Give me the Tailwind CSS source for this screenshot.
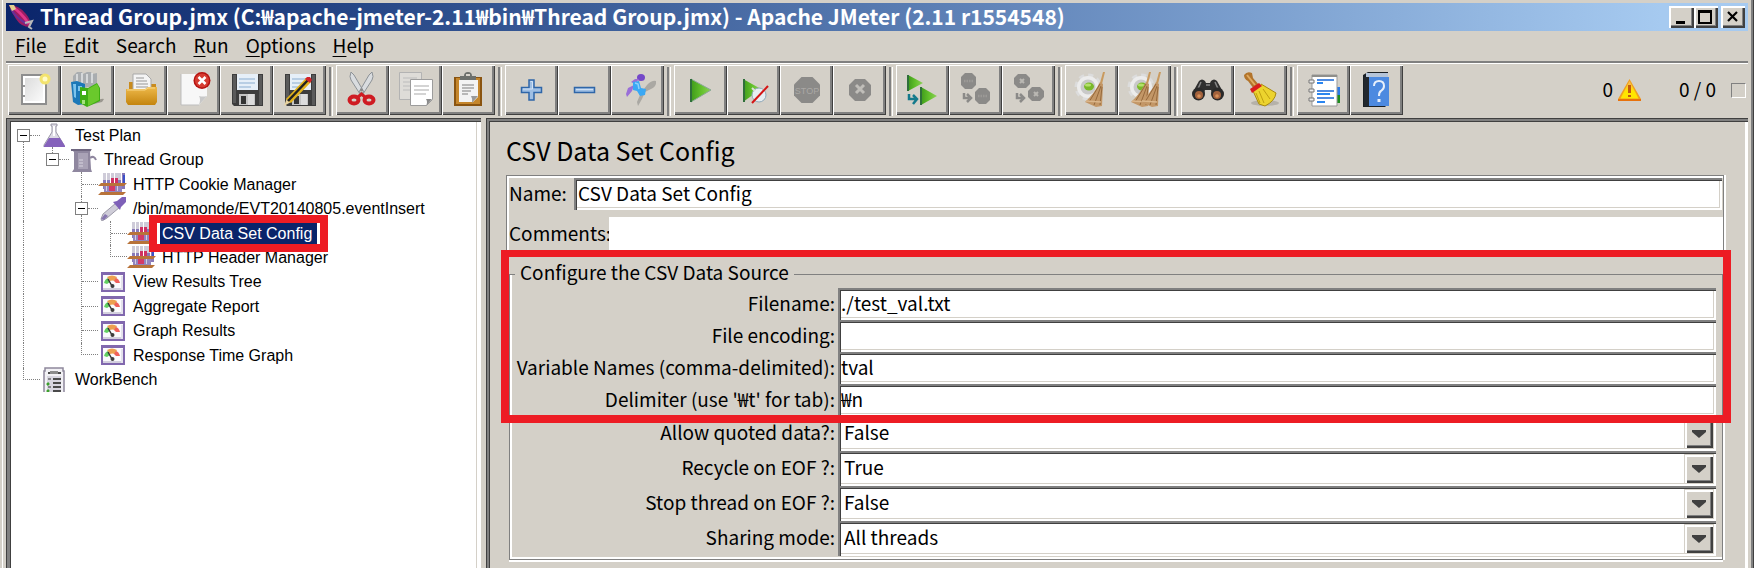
<!DOCTYPE html>
<html lang="en">
<head>
<meta charset="utf-8">
<title>Apache JMeter</title>
<script src="https://cdn.jsdelivr.net/npm/@tailwindcss/browser@4"></script>
</head>
<body class="bg-white font-['Noto_Sans_CJK_KR','Noto_Sans',sans-serif] text-[19px] leading-6 text-black">

<svg class="absolute h-0 w-0" aria-hidden="true">
  <defs>
    <linearGradient id="gGreen" x1="0" y1="0" x2="1" y2="0"><stop offset="0" stop-color="#3f9a1c"/><stop offset=".5" stop-color="#62c02a"/><stop offset="1" stop-color="#8fd05a"/></linearGradient>
    <linearGradient id="gFolder" x1="0" y1="0" x2="0" y2="1"><stop offset="0" stop-color="#eeb94a"/><stop offset="1" stop-color="#c4850f"/></linearGradient>
    <linearGradient id="gPaper" x1="0" y1="0" x2="1" y2="1"><stop offset="0" stop-color="#dcdcdc"/><stop offset="1" stop-color="#fafafa"/></linearGradient>
    <linearGradient id="gWarn" x1="0" y1="0" x2="0" y2="1"><stop offset="0" stop-color="#f7b45a"/><stop offset=".6" stop-color="#ffe600"/><stop offset="1" stop-color="#ffe600"/></linearGradient>
    <symbol id="floppy" viewBox="0 0 36 36">
      <path d="M3 2h31v32H5l-2-2z" fill="#3d3d3d"/><path d="M4 3h3v28H4zM30 3h3v30h-3z" fill="#5a5a5a"/>
      <path d="M8 2h21v16H8z" fill="#e6eff8"/><path d="M10 7h16M10 11h16M10 15h12" stroke="#a9c3dd" stroke-width="1.4"/>
      <path d="M10 22h16v11H10z" fill="#c4c4c4"/><path d="M12 24h5v8h-5z" fill="#333"/><path d="M19 22h6v11h-6z" fill="#dcdcdc"/>
    </symbol>
    <symbol id="tubes" viewBox="0 0 29 24">
      <path d="M5 1h3v16H5zM9 1h3v16H9zM20 1h3v16h-3zM24 1h3v16h-3z" fill="#8878b8"/>
      <path d="M13 1h3v16h-3zM17 1h3v16h-3z" fill="#cf3163"/>
      <path d="M5 1h3v7H5zM9 1h3v7H9zM13 1h3v5h-3zM17 1h3v5h-3zM20 1h3v7h-3z" fill="#cfccd9"/>
      <path d="M25 3h2v8h-2z" fill="#3c50c8"/>
      <path d="M3 11h26l-3 3H0zM3 20h25l-3 3H0z" fill="#b8733a"/><path d="M6 14h18v6H6z" fill="#9385be"/><path d="M11 14h6v5h-6z" fill="#d33a68"/><path d="M8 14h1v5H8zM19 14h1v5h-1z" fill="#d4d0e4"/>
    </symbol>
    <symbol id="gauge" viewBox="0 0 24 20">
      <path d="M0 0h24v20H0z" fill="#8168ae"/><path d="M2 3h20v15H2z" fill="#fbfbfd"/><path d="M2 16h20v2H2z" fill="#d3d0de"/><path d="M20 4h2v14h-2z" fill="#e4e2ec"/>
      <path d="M3 11q1-4 4-5l2 4-3 2z" fill="#62cf62"/><path d="M6 5q5-3 10 0l-2 4q-3-1-5 0z" fill="#eda050"/><path d="M15 6q3 1 4 5h-4l-2-2z" fill="#f0605a"/>
      <path d="M7 7l4 7" stroke="#333" stroke-width="1.5"/><circle cx="11.500" cy="14" r="2" fill="#3d3d3d"/>
    </symbol>
    <symbol id="gear" viewBox="0 0 36 36">
      <circle cx="14" cy="15" r="11.500" fill="none" stroke="#dcdcdc" stroke-width="4" stroke-dasharray="5 4"/>
      <circle cx="14" cy="15" r="11" fill="#ececec"/><circle cx="14" cy="15" r="7.500" fill="#c9c9c9"/>
      <ellipse cx="15" cy="14.500" rx="5" ry="4" fill="#79b82a"/><ellipse cx="14" cy="13" rx="3" ry="1.500" fill="#b4e06a"/>
    </symbol>
    <symbol id="bristles" viewBox="0 0 20 36">
      <path d="M18 0h2l-3 12-2-1z" fill="#c99a5f"/><path d="M15 10l3 2-1 22-6 1L0 30q9-8 15-20z" fill="#c39767"/>
      <path d="M15 12L4 30M16 14L9 33M17 15l-2 18" stroke="#96693c" stroke-width="1"/><path d="M1 29l15 1" stroke="#dbb78c" stroke-width="1.500"/>
    </symbol>
  </defs>
</svg>

<div class="mr-[5px] flex h-screen flex-col overflow-hidden border-r border-r-[#404040] bg-[#d4d0c8] pl-[2px] pt-[3px] shadow-[inset_-2px_0_0_#808080,inset_2px_0_0_#d4d0c8,inset_3px_0_0_#fff]">

  <header class="ml-[4px] mr-[5px] flex h-[28px] shrink-0 items-center bg-linear-to-r from-[#0a246a] to-[#a6caf0] to-95% pr-[3px]">
    <svg class="ml-[2px] mr-[6px] h-[26px] w-[26px]" viewBox="0 0 26 26" aria-hidden="true">
      <path d="M1 1q10 0 17 9 6 7 4 13-9 0-14-8Q3 8 1 1z" fill="#9a1d63"/><path d="M4 3q8 4 17 17" stroke="#e0358a" stroke-width="3" fill="none"/><path d="M3 5q5 9 16 15" stroke="#6a2f9a" stroke-width="2" fill="none"/><path d="M1 1h5l2 4-4 2z" fill="#e2cf8e"/><path d="M17 19l7-2-3 6 3 2" stroke="#b9b9b9" stroke-width="2" fill="none"/>
    </svg>
    <h1 class="flex-1 whitespace-nowrap pb-[2px] text-[21px] font-bold leading-[26px] text-white">Thread Group.jmx (C:₩apache-jmeter-2.11₩bin₩Thread Group.jmx) - Apache JMeter (2.11 r1554548)</h1>
    <div class="flex">
      <button aria-label="Minimize" class="flex h-[22px] w-[25px] items-center justify-center bg-[#d4d0c8] shadow-[inset_2px_2px_0_#fff,inset_-2px_-2px_0_#404040,inset_-3px_-3px_0_#808080]"><svg class="h-[16px] w-[16px]" viewBox="0 0 16 16"><path d="M2 12h9v3H2z"/></svg></button>
      <button aria-label="Maximize" class="flex h-[22px] w-[24px] items-center justify-center bg-[#d4d0c8] shadow-[inset_2px_2px_0_#fff,inset_-2px_-2px_0_#404040,inset_-3px_-3px_0_#808080]"><svg class="h-[16px] w-[16px]" viewBox="0 0 16 16"><path d="M0 1h14v14H0zM2 4v9h10V4z" fill-rule="evenodd"/></svg></button>
      <button aria-label="Close" class="ml-[3px] flex h-[22px] w-[24px] items-center justify-center bg-[#d4d0c8] shadow-[inset_2px_2px_0_#fff,inset_-2px_-2px_0_#404040,inset_-3px_-3px_0_#808080]"><svg class="h-[16px] w-[16px]" viewBox="0 0 16 16"><path d="M3 3l9 9M12 3l-9 9" stroke="#000" stroke-width="2.200"/></svg></button>
    </div>
  </header>

  <nav class="ml-[4px] mr-[5px] flex h-[30px] shrink-0 items-center gap-[17px] pb-[2px] pl-[9px]">
    <button><u class="underline-offset-3">F</u>ile</button>
    <button><u class="underline-offset-3">E</u>dit</button>
    <button>Search</button>
    <button><u class="underline-offset-3">R</u>un</button>
    <button><u class="underline-offset-3">O</u>ptions</button>
    <button><u class="underline-offset-3">H</u>elp</button>
  </nav>
  <div class="ml-[4px] mr-[5px] h-[3px] shrink-0 border-b border-white bg-[#808080]"></div>

  <div class="ml-[6px] mr-[5px] flex h-[54px] shrink-0 items-center gap-[3px] pb-[2px]">
    <div class="flex *:flex *:h-[50px] *:w-[53px] *:items-center *:justify-center *:shadow-[inset_1px_1px_0_#fff,inset_-1px_-1px_0_#404040,inset_-3px_-3px_0_#808080]">
      <button aria-label="New"><svg class="size-[36px]" viewBox="0 0 36 36"><path d="M4 2h26v31H4z" fill="#8e8e8e"/><path d="M6 4h22v27H6z" fill="#fff"/><path d="M8 6h18v23H8z" fill="url(#gPaper)"/><path d="M6 13h2v2H6zM6 23h2v2H6z" fill="#999"/><circle cx="28" cy="7" r="5.500" fill="#f3e36e"/><circle cx="28" cy="7" r="2.500" fill="#fffbc8"/></svg></button>
      <button aria-label="Templates"><svg class="size-[36px]" viewBox="0 0 36 36"><path d="M3 4l4-4h5l1 2 4-2h4l1 2 5-1v14H3z" fill="#a9adb0"/><path d="M7 2v9M12 1v10M17 2v9M22 1v10" stroke="#e4e6e8" stroke-width="1.500"/><path d="M1 10l6-1 8 3v20l-7 1-5-3z" fill="#1b78b8"/><path d="M3 12h3v14l-2-1zM8 14h4v5H8z" fill="#7cc3ec"/><path d="M25 30q6-4 9-3l-2 3-12 3z" fill="#9a978f"/><path d="M10 15l8 1 9-5 3 5v13l-13 6-7-4z" fill="#3fae14"/><path d="M18 17l9-5 2 4v12l-11 6z" fill="#6ac92c"/><path d="M12 19h4v4h-4z" fill="#fff"/><path d="M12 28h3v4h-3z" fill="#a4e27c"/></svg></button>
      <button aria-label="Open"><svg class="size-[36px]" viewBox="0 0 36 36"><path d="M6 10h6l2 2h19v12H6z" fill="#c98b1d"/><path d="M10 2h13l5 5v15H10z" fill="#f4f4f4" stroke="#a9a9a9"/><path d="M13 6h8M13 9h11M13 12h12M13 15h12" stroke="#b5b5b5" stroke-width="1.300"/><path d="M3 17h19l3-2h9v15l-2 3H5l-2-3z" fill="url(#gFolder)"/><path d="M4 18h18l3-2h7" stroke="#f8d88a" fill="none"/></svg></button>
      <button aria-label="Close file"><svg class="size-[36px]" viewBox="0 0 36 36"><path d="M5 2h26v22l-8 9H5z" fill="#f7f7f7"/><path d="M5 2v31h18" stroke="#bdbdbd" fill="none"/><path d="M31 24l-8 9q2-6 0-9 4 1 8 0z" fill="#c8c8c8"/><circle cx="26" cy="8.500" r="8.500" fill="#b5120f"/><circle cx="26" cy="8.500" r="7" fill="#d63c31"/><path d="M22.500 5l7 7M29.500 5l-7 7" stroke="#fff" stroke-width="2.500"/></svg></button>
      <button aria-label="Save"><svg class="size-[36px]"><use href="#floppy"/></svg></button>
      <button aria-label="Save as"><svg class="size-[36px]" viewBox="0 0 36 36"><use href="#floppy" width="36" height="36"/><path d="M2 34l3-8 4 4z" fill="#e8d3a0"/><path d="M4 27L24 6l5 4L9 31z" fill="#e2b21c"/><path d="M6 29L26 8" stroke="#222" stroke-width="2.500"/><path d="M23 7l2-2h3l2 3-2 3z" fill="#d2232a"/></svg></button>
    </div>
    <div class="h-[49px] w-[4px] self-end border-l-2 border-r border-l-[#808080] border-r-white"></div>
    <div class="flex *:flex *:h-[50px] *:w-[53px] *:items-center *:justify-center *:shadow-[inset_1px_1px_0_#fff,inset_-1px_-1px_0_#404040,inset_-3px_-3px_0_#808080]">
      <button aria-label="Cut"><svg class="size-[36px]" viewBox="0 0 36 36"><path d="M6 0q-2 5 0 8l9 14 4-2L9 3zM27 0q2 5 0 8l-9 14-4-2L24 3z" fill="#d9dcdf" stroke="#8c9196"/><circle cx="16.500" cy="18" r="1.500" fill="#888"/><g fill="none" stroke="#cf1b22" stroke-width="4"><ellipse cx="9" cy="28" rx="4.500" ry="3.500"/><ellipse cx="24" cy="28" rx="4.500" ry="3.500"/><path d="M13 25l3.500-3 3.500 3" stroke-width="3"/></g></svg></button>
      <button aria-label="Copy"><svg class="size-[36px]" viewBox="0 0 36 36"><path d="M1.500.5h22v27h-22z" fill="#dedcd8" stroke="#b3b3b3"/><path d="M5 6h14M5 10h8M5 14h7M5 18h7" stroke="#bcbcbc"/><path d="M12.500 7.500h22v20l-6 6h-16z" fill="#fff" stroke="#9c9c9c"/><path d="M16 14h15M16 18h15M16 22h12" stroke="#c6c6c6" stroke-width="1.500"/><path d="M34 27l-6 7q2-4 0-7z" fill="#8a8a8a"/></svg></button>
      <button aria-label="Paste"><svg class="size-[36px]" viewBox="0 0 36 36"><path d="M3 5h28v29H3z" fill="#8a5410"/><path d="M5 6h24v26H5z" fill="#c5862b"/><path d="M8 8h19v17l-5 5H8z" fill="#f3f3f3"/><path d="M11 13h12M11 16h12M11 19h9M11 22h6" stroke="#a5a5a5" stroke-width="1.300"/><path d="M27 24l-6 7q1-4-1-7z" fill="#999"/><path d="M9 4h4q0-4 4-4t4 4h4v4H9z" fill="#6d706c"/><path d="M15 2h4v2h-4z" fill="#d8d4cc"/></svg></button>
    </div>
    <div class="h-[49px] w-[4px] self-end border-l-2 border-r border-l-[#808080] border-r-white"></div>
    <div class="flex *:flex *:h-[50px] *:w-[53px] *:items-center *:justify-center *:shadow-[inset_1px_1px_0_#fff,inset_-1px_-1px_0_#404040,inset_-3px_-3px_0_#808080]">
      <button aria-label="Expand all"><svg class="size-[36px]" viewBox="0 0 36 36"><path d="M15 8h5v7.500h7.500v5H20V28h-5v-7.500H7.500v-5H15z" fill="#9fbfe4" stroke="#2f66a8" stroke-width="1.500"/><path d="M16.500 9.500h2v7.500H9" stroke="#d3e3f5" fill="none"/></svg></button>
      <button aria-label="Collapse all"><svg class="size-[36px]" viewBox="0 0 36 36"><path d="M7.500 15.500h20v5h-20z" fill="#9fbfe4" stroke="#2f66a8" stroke-width="1.500"/><path d="M9 17.500h17" stroke="#cfe0f4"/></svg></button>
      <button aria-label="Toggle"><svg class="size-[36px]" viewBox="0 0 36 36"><path d="M19 21l5-4 3-4q5-5 9-4 1 5-5 8l-6 3-3 7-4 7-1-4 3-7z" fill="#aaa8a3"/><g fill="#7448c8"><ellipse cx="21" cy="5.500" rx="4" ry="3.500"/><path d="M11 10l4-3 4 0-4 5zM14 13l-2 6-5 6-1-3 2-6z" fill="#9a6fd8"/></g><path d="M13 10l6-1 2 7 5 1-1 6-5 1-3-5-4-1z" fill="#3aa8f4"/><path d="M15 11l3 1 1 5" stroke="#8fd2fb" stroke-width="1.500" fill="none"/></svg></button>
    </div>
    <div class="h-[49px] w-[4px] self-end border-l-2 border-r border-l-[#808080] border-r-white"></div>
    <div class="flex *:flex *:h-[50px] *:w-[53px] *:items-center *:justify-center *:shadow-[inset_1px_1px_0_#fff,inset_-1px_-1px_0_#404040,inset_-3px_-3px_0_#808080]">
      <button aria-label="Start"><svg class="size-[36px]" viewBox="0 0 36 36"><path d="M8 7l20 11L8 30z" fill="url(#gGreen)"/><path d="M8 7l20 11L8 30" stroke="#8aa897" fill="none"/><path d="M7 7h2v23H7z" fill="#2f6f3a"/></svg></button>
      <button aria-label="Start no pauses"><svg class="size-[36px]" viewBox="0 0 36 36"><path d="M7 7l18 10L7 30z" fill="url(#gGreen)"/><path d="M7 7h2v23H7z" fill="#2f6f3a"/><circle cx="23" cy="23" r="7" fill="#e6eef2" stroke="#8fa8b8"/><path d="M16 16l3 3M30 16l-3 3" stroke="#ddd" stroke-width="2"/><path d="M16 31l16-17" stroke="#d41414" stroke-width="2"/></svg></button>
      <button aria-label="Stop" disabled><svg class="size-[36px]" viewBox="0 0 36 36"><path d="M12.500 5h11L31 12.500v11L23.500 31h-11L5 23.500v-11z" fill="#8b8a88"/><text x="18" y="22" text-anchor="middle" font-family="Liberation Sans" font-size="9" fill="#aaa8a5">STOP</text></svg></button>
      <button aria-label="Shutdown" disabled><svg class="size-[36px]" viewBox="0 0 36 36"><path d="M13 7h10l6 6v10l-6 6H13l-6-6V13z" fill="#8b8a88"/><path d="M14 13l8 8M22 13l-8 8" stroke="#c0beb9" stroke-width="3"/></svg></button>
    </div>
    <div class="h-[49px] w-[4px] self-end border-l-2 border-r border-l-[#808080] border-r-white"></div>
    <div class="flex *:flex *:h-[50px] *:w-[53px] *:items-center *:justify-center *:shadow-[inset_1px_1px_0_#fff,inset_-1px_-1px_0_#404040,inset_-3px_-3px_0_#808080]">
      <button aria-label="Remote start all"><svg class="size-[36px]" viewBox="0 0 36 36"><path d="M3 3l15 8-15 8z" fill="url(#gGreen)"/><path d="M2 3h2v16H2z" fill="#2f6f3a"/><path d="M16 15l16 9-16 9z" fill="url(#gGreen)"/><path d="M15 15h2v18h-2z" fill="#2f6f3a"/><path d="M4 22v5h7M8 23l4 4-4 5" stroke="#147a8c" stroke-width="2.500" fill="none"/></svg></button>
      <button aria-label="Remote stop all" disabled><svg class="size-[36px]" viewBox="0 0 36 36" fill="#8b8a88"><path d="M7 1h7l4 4v8l-4 4H7l-4-4V5zM21 16h7l4 4v8l-4 4h-7l-4-4v-8z"/><path d="M6 9h9M20 24h9" stroke="#9c9a97" stroke-width="2.500" stroke-dasharray="1.500 1"/><path d="M6 21v5h5M9 22l4 4-4 4" stroke="#8b8a88" stroke-width="2.500" fill="none"/></svg></button>
      <button aria-label="Remote shutdown all" disabled><svg class="size-[36px]" viewBox="0 0 36 36" fill="#8b8a88"><path d="M7 2h8l4 4v6l-4 4H7l-4-4V6zM21 15h8l4 4v6l-4 4h-8l-4-4v-6z"/><path d="M9 7l4 4M13 7l-4 4M23 20l4 4M27 20l-4 4" stroke="#bab8b3" stroke-width="2"/><path d="M6 21v5h5M9 22l4 4-4 4" stroke="#8b8a88" stroke-width="2.500" fill="none"/></svg></button>
    </div>
    <div class="h-[49px] w-[4px] self-end border-l-2 border-r border-l-[#808080] border-r-white"></div>
    <div class="flex *:flex *:h-[50px] *:w-[53px] *:items-center *:justify-center *:shadow-[inset_1px_1px_0_#fff,inset_-1px_-1px_0_#404040,inset_-3px_-3px_0_#808080]">
      <button aria-label="Clear"><svg class="size-[36px]" viewBox="0 0 36 36"><use href="#gear" width="36" height="36"/><use href="#bristles" x="11" y="0" width="20" height="36"/></svg></button>
      <button aria-label="Clear all"><svg class="size-[36px]" viewBox="0 0 36 36"><use href="#gear" width="36" height="36"/><use href="#bristles" x="4" y="0" width="20" height="36"/><use href="#bristles" x="14" y="0" width="20" height="36"/></svg></button>
    </div>
    <div class="h-[49px] w-[4px] self-end border-l-2 border-r border-l-[#808080] border-r-white"></div>
    <div class="flex *:flex *:h-[50px] *:w-[53px] *:items-center *:justify-center *:shadow-[inset_1px_1px_0_#fff,inset_-1px_-1px_0_#404040,inset_-3px_-3px_0_#808080]">
      <button aria-label="Search tree"><svg class="size-[36px]" viewBox="0 0 36 36"><path d="M9 9q3-3 6 0l1 2h4l1-2q3-3 6 0l5 9v6h-9l-2-6h-6l-2 6H4v-6z" fill="#2f2f2f"/><path d="M11 10l-4 9M25 10l4 9M16 13h4" stroke="#888" stroke-width="1.500"/><circle cx="8.500" cy="22" r="6.500" fill="#2a2a2a"/><circle cx="27.500" cy="22" r="6.500" fill="#2a2a2a"/><circle cx="9" cy="23" r="4" fill="#a3623c"/><circle cx="27" cy="23" r="4" fill="#a3623c"/><circle cx="9" cy="24" r="1.800" fill="#d89058"/><circle cx="27" cy="24" r="1.800" fill="#d89058"/></svg></button>
      <button aria-label="Reset search"><svg class="size-[36px]" viewBox="0 0 36 36"><ellipse cx="22" cy="31" rx="14" ry="3" fill="#b5b1a9"/><path d="M1 3q3-4 8-2l1 5 6 7-5 4-6-8q-4-2-4-6z" fill="#b3752c"/><path d="M4 3l8 10" stroke="#e0aa60" stroke-width="2"/><path d="M18 12l15 9q-1 8-11 13l-6-2-6-13z" fill="#ecd32e"/><path d="M20 17l7 10M16 19l5 12M13 21l4 10" stroke="#c0a010"/><path d="M18 12l15 9q-1 8-11 13l-6-2-6-13" fill="none" stroke="#a88a10"/><path d="M7 17l9-6 3 3-10 7z" fill="#d81e1e"/></svg></button>
    </div>
    <div class="h-[49px] w-[4px] self-end border-l-2 border-r border-l-[#808080] border-r-white"></div>
    <div class="flex *:flex *:h-[50px] *:w-[53px] *:items-center *:justify-center *:shadow-[inset_1px_1px_0_#fff,inset_-1px_-1px_0_#404040,inset_-3px_-3px_0_#808080]">
      <button aria-label="Function helper"><svg class="size-[36px]" viewBox="0 0 36 36"><path d="M31 15h3v8h-3z" fill="#2b7ae8"/><path d="M31 23h3v8h-3z" fill="#1d8c1d"/><path d="M6 3h25v31H6z" fill="#fff" stroke="#999"/><path d="M6 3h25v2H6z" fill="#8f8f8b"/><path d="M11 8h17M11 19h17M11 26h17" stroke="#1565d8" stroke-width="1.600"/><path d="M11 11h6M11 22h13M11 30h8" stroke="#2a86f0" stroke-width="2"/><path d="M3 8h5v3H3zM3 17h5v3H3zM3 26h5v3H3z" fill="#eee" stroke="#777"/></svg></button>
      <button aria-label="Help"><svg class="size-[36px]" viewBox="0 0 36 36"><path d="M4 3l5-3h20v32l-3 3H4z" fill="#1b2024"/><path d="M7 1h22v4H7z" fill="#b5c4d8"/><path d="M10 5h20v29H10z" fill="#4d8ae0"/><path d="M5 5h5v29H5z" fill="#22282e"/><path d="M15 14q0-5 5-5t5 5q0 3-3 5-2 1-2 5" fill="none" stroke="#e8f0fb" stroke-width="2"/><path d="M18.500 27h3v3h-3z" fill="#e8f0fb"/></svg></button>
    </div>
    <div class="flex flex-1 items-center justify-end">
      <span class="pb-[2px]">0</span>
      <svg class="ml-[5px] h-[22px] w-[23px]" viewBox="0 0 23 22" aria-label="Warnings"><path d="M11.500 0L23 20v2H0v-2z" fill="#f0a020"/><path d="M0 20h23v2H0z" fill="#e8720c"/><path d="M11.500 2l9 17.500h-18z" fill="url(#gWarn)"/><path d="M10 6h3v8h-3zM10 16h3v2h-3z" fill="#c25a12"/></svg>
      <span class="ml-[38px] pb-[2px]">0 / 0</span>
      <span class="ml-[15px] mr-[2px] size-[15px] border border-b-white border-l-[#808080] border-r-white border-t-[#808080]"></span>
    </div>
  </div>

  <main class="ml-[4px] mr-[5px] flex min-h-0 flex-1">
    <section aria-label="Test tree" class="w-[475px] shrink-0 bg-white pl-[5px] pt-[5px] shadow-[inset_1px_1px_0_#404040,inset_4px_3px_0_#808080,inset_5px_4px_0_#404040,inset_-4px_0_0_#fff,inset_-5px_0_0_#d4d0c8]">
      <ul class="flex h-[269px] flex-col font-['Liberation_Sans',sans-serif] text-[16px] leading-[21px] *:flex *:min-h-0 *:flex-1 *:items-center">
        <li>
          <div class="flex h-full w-[29px] flex-col">
            <div class="flex-1"></div>
            <div class="flex items-center pl-[6px]"><button aria-label="Collapse" class="flex size-[13px] items-center justify-center border border-[#808080] bg-white"><span class="h-px w-[7px] bg-black"></span></button><span class="flex-1 border-t border-dotted border-[#808080]"></span></div>
            <div class="ml-[12px] flex-1 border-l border-dotted border-[#808080]"></div>
          </div>
          <svg class="mr-[4px] h-[24px] w-[29px]" viewBox="0 0 29 24"><path d="M11 1h6v2h-1v6l8 13v2H4v-2l8-13V3h-1z" fill="#dcdae4" stroke="#9a98a6"/><path d="M9 15h11l5 8v1H4v-1z" fill="#8562bb"/><path d="M13 3h2v10h-2z" fill="#fff"/></svg>
          <span class="px-[2px]">Test Plan</span>
        </li>
        <li>
          <div class="h-full w-[29px] pl-[12px]"><div class="h-full border-l border-dotted border-[#808080]"></div></div>
          <div class="flex h-full w-[29px] flex-col">
            <div class="ml-[12px] flex-1 border-l border-dotted border-[#808080]"></div>
            <div class="flex items-center pl-[6px]"><button aria-label="Collapse" class="flex size-[13px] items-center justify-center border border-[#808080] bg-white"><span class="h-px w-[7px] bg-black"></span></button><span class="flex-1 border-t border-dotted border-[#808080]"></span></div>
            <div class="flex-1"></div>
          </div>
          <svg class="mr-[4px] h-[24px] w-[29px]" viewBox="0 0 29 24"><path d="M2 1h21l-2 3 1 17 1 3H3l2-3V4z" fill="#8f879f"/><path d="M9 5h10v16H9z" fill="#a9a2b6"/><path d="M2 1h20v2H2z" fill="#6f6780"/><path d="M21 10q4-3 6 2" fill="none" stroke="#8f879f" stroke-width="2"/><path d="M10 12h4M10 15h4M10 18h4" stroke="#d8d5e0"/></svg>
          <span class="px-[2px]">Thread Group</span>
        </li>
        <li>
          <div class="h-full w-[29px] pl-[12px]"><div class="h-full border-l border-dotted border-[#808080]"></div></div>
          <div class="w-[29px]"></div>
          <div class="h-full w-[29px] pl-[12px]"><div class="flex h-full items-center border-l border-dotted border-[#808080]"><span class="flex-1 border-t border-dotted border-[#808080]"></span></div></div>
          <svg class="mr-[4px] h-[24px] w-[29px]"><use href="#tubes"/></svg>
          <span class="px-[2px]">HTTP Cookie Manager</span>
        </li>
        <li>
          <div class="h-full w-[29px] pl-[12px]"><div class="h-full border-l border-dotted border-[#808080]"></div></div>
          <div class="w-[29px]"></div>
          <div class="flex h-full w-[29px] flex-col">
            <div class="ml-[12px] flex-1 border-l border-dotted border-[#808080]"></div>
            <div class="flex items-center pl-[6px]"><button aria-label="Collapse" class="flex size-[13px] items-center justify-center border border-[#808080] bg-white"><span class="h-px w-[7px] bg-black"></span></button><span class="flex-1 border-t border-dotted border-[#808080]"></span></div>
            <div class="ml-[12px] flex-1 border-l border-dotted border-[#808080]"></div>
          </div>
          <svg class="mr-[4px] h-[24px] w-[29px]" viewBox="0 0 29 24"><path d="M3 22l2-5L18 6l4 4L9 21l-5 3z" fill="#cfcdd8" stroke="#9c9aa8"/><path d="M3 22l4-5 3 2-4 4z" fill="#8878b0"/><path d="M15 5l4-1 5-4h4v5l-5 5-1 3z" fill="#7e60b8"/></svg>
          <span class="px-[2px]">/bin/mamonde/EVT20140805.eventInsert</span>
        </li>
        <li>
          <div class="h-full w-[29px] pl-[12px]"><div class="h-full border-l border-dotted border-[#808080]"></div></div>
          <div class="w-[29px]"></div>
          <div class="h-full w-[29px] pl-[12px]"><div class="h-full border-l border-dotted border-[#808080]"></div></div>
          <div class="h-full w-[29px] pl-[12px]"><div class="flex h-full items-center border-l border-dotted border-[#808080]"><span class="flex-1 border-t border-dotted border-[#808080]"></span></div></div>
          <svg class="mr-[4px] h-[24px] w-[29px]"><use href="#tubes"/></svg>
          <div class="relative bg-[#0a246a] pl-[2px] pr-[5px] text-white">CSV Data Set Config<span class="absolute -inset-x-[11px] -bottom-[8px] -top-[8px] z-10 border-8 border-[#ed1c24]"></span></div>
        </li>
        <li>
          <div class="h-full w-[29px] pl-[12px]"><div class="h-full border-l border-dotted border-[#808080]"></div></div>
          <div class="w-[29px]"></div>
          <div class="h-full w-[29px] pl-[12px]"><div class="h-full border-l border-dotted border-[#808080]"></div></div>
          <div class="h-full w-[29px] pl-[12px]"><div class="h-1/2 border-b border-l border-dotted border-[#808080]"></div></div>
          <svg class="mr-[4px] h-[24px] w-[29px]"><use href="#tubes"/></svg>
          <span class="px-[2px]">HTTP Header Manager</span>
        </li>
        <li>
          <div class="h-full w-[29px] pl-[12px]"><div class="h-full border-l border-dotted border-[#808080]"></div></div>
          <div class="w-[29px]"></div>
          <div class="h-full w-[29px] pl-[12px]"><div class="flex h-full items-center border-l border-dotted border-[#808080]"><span class="flex-1 border-t border-dotted border-[#808080]"></span></div></div>
          <svg class="ml-[3px] mr-[6px] h-[20px] w-[24px]"><use href="#gauge"/></svg>
          <span class="px-[2px]">View Results Tree</span>
        </li>
        <li>
          <div class="h-full w-[29px] pl-[12px]"><div class="h-full border-l border-dotted border-[#808080]"></div></div>
          <div class="w-[29px]"></div>
          <div class="h-full w-[29px] pl-[12px]"><div class="flex h-full items-center border-l border-dotted border-[#808080]"><span class="flex-1 border-t border-dotted border-[#808080]"></span></div></div>
          <svg class="ml-[3px] mr-[6px] h-[20px] w-[24px]"><use href="#gauge"/></svg>
          <span class="px-[2px]">Aggregate Report</span>
        </li>
        <li>
          <div class="h-full w-[29px] pl-[12px]"><div class="h-full border-l border-dotted border-[#808080]"></div></div>
          <div class="w-[29px]"></div>
          <div class="h-full w-[29px] pl-[12px]"><div class="flex h-full items-center border-l border-dotted border-[#808080]"><span class="flex-1 border-t border-dotted border-[#808080]"></span></div></div>
          <svg class="ml-[3px] mr-[6px] h-[20px] w-[24px]"><use href="#gauge"/></svg>
          <span class="px-[2px]">Graph Results</span>
        </li>
        <li>
          <div class="h-full w-[29px] pl-[12px]"><div class="h-full border-l border-dotted border-[#808080]"></div></div>
          <div class="w-[29px]"></div>
          <div class="h-full w-[29px] pl-[12px]"><div class="h-1/2 border-b border-l border-dotted border-[#808080]"></div></div>
          <svg class="ml-[3px] mr-[6px] h-[20px] w-[24px]"><use href="#gauge"/></svg>
          <span class="px-[2px]">Response Time Graph</span>
        </li>
        <li>
          <div class="h-full w-[29px] pl-[12px]"><div class="h-1/2 border-b border-l border-dotted border-[#808080]"></div></div>
          <svg class="mr-[4px] h-[25px] w-[29px]" viewBox="0 0 29 25"><path d="M4 25V4h1V1h18v3h1v21" fill="#f2f1f5" stroke="#8e889c" stroke-width="1.500"/><path d="M8 5h13v2H8z" fill="#4a4a4a"/><path d="M10 4h8v3h-8z" fill="#8b8b8b"/><path d="M7 9h14v16H7z" fill="#d8d6e0"/><path d="M13 12h8M13 16h8M13 20h8M13 24h8" stroke="#4a4a4a" stroke-width="2"/><path d="M8 12h3M8 20h3" stroke="#333"/><path d="M7 18l2-2M7 25l2-2" stroke="#3ca02c" stroke-width="2.500"/></svg>
          <span class="px-[2px]">WorkBench</span>
        </li>
      </ul>
    </section>

    <section aria-label="CSV Data Set Config" class="ml-[5px] min-w-0 flex-1 pl-[20px] pr-[24px] pt-[19px] shadow-[inset_1px_1px_0_#404040,inset_3px_3px_0_#808080,inset_4px_4px_0_#404040,inset_-3px_0_0_#fff]">
      <h2 class="h-[38px] text-[25px] leading-[26px]">CSV Data Set Config</h2>

      <div class="flex flex-col border border-b-0 border-[#808080] pl-[2px] shadow-[inset_2px_2px_0_#fff,2px_0_0_#fff]">
        <div class="flex items-center pr-[1px] pt-[2px]">
          <label for="name" class="w-[65px] pb-[3px]">Name:</label>
          <input id="name" type="text" value="CSV Data Set Config" class="h-[32px] min-w-0 flex-1 bg-white pb-[3px] pl-[4px] pr-1 shadow-[inset_2px_2px_0_#808080,inset_3px_3px_0_#404040,inset_-2px_-2px_0_#fff,inset_-3px_-3px_0_#d4d0c8]">
        </div>
        <div class="flex items-center pt-[7px]">
          <label for="comments" class="w-[100px] pb-[2px]">Comments:</label>
          <input id="comments" type="text" value="" class="h-[33px] min-w-0 flex-1 bg-white px-1">
        </div>
      </div>

      <div class="relative ml-[3px] mr-px pt-[10px]">
        <span class="pointer-events-none absolute -left-[8px] -right-[8px] top-0 z-10 h-[173px] border-8 border-t-7 border-[#ed1c24]"></span>
        <fieldset class="border border-[#808080] pb-[3px] pl-[2px] pr-[6px] shadow-[inset_2px_0_0_#fff,inset_0_-2px_0_#fff,2px_0_0_#fff,0_2px_0_#fff]">
          <legend class="ml-[3px] px-[5px] pb-1 leading-6">Configure the CSV Data Source</legend>
          <div class="grid grid-cols-[326px_1fr] items-center [&>label]:pb-[3px] [&>label]:pr-[3px] [&>label]:text-right">
            <label for="filename">Filename:</label>
            <input id="filename" type="text" value="./test_val.txt" class="h-[32px] min-w-0 bg-white pb-[3px] pl-[3px] shadow-[inset_2px_2px_0_#808080,inset_3px_3px_0_#404040,inset_-2px_-2px_0_#fff,inset_-3px_-3px_0_#d4d0c8]">
            <label for="encoding">File encoding:</label>
            <input id="encoding" type="text" value="" class="h-[32px] min-w-0 bg-white pb-[3px] pl-[3px] shadow-[inset_2px_2px_0_#808080,inset_3px_3px_0_#404040,inset_-2px_-2px_0_#fff,inset_-3px_-3px_0_#d4d0c8]">
            <label for="vars">Variable Names (comma-delimited):</label>
            <input id="vars" type="text" value="tval" class="h-[32px] min-w-0 bg-white pb-[3px] pl-[3px] shadow-[inset_2px_2px_0_#808080,inset_3px_3px_0_#404040,inset_-2px_-2px_0_#fff,inset_-3px_-3px_0_#d4d0c8]">
            <label for="delim">Delimiter (use '₩t' for tab):</label>
            <input id="delim" type="text" value="₩n" class="h-[32px] min-w-0 bg-white pb-[3px] pl-[3px] shadow-[inset_2px_2px_0_#808080,inset_3px_3px_0_#404040,inset_-2px_-2px_0_#fff,inset_-3px_-3px_0_#d4d0c8]">

            <label for="quoted">Allow quoted data?:</label>
            <div class="relative">
              <select id="quoted" class="block h-[35px] w-full appearance-none bg-white pb-[3px] pl-[6px] shadow-[inset_2px_2px_0_#808080,inset_3px_3px_0_#404040,inset_-2px_-2px_0_#fff,inset_-3px_-3px_0_#d4d0c8]"><option>False</option><option>True</option></select>
              <span class="pointer-events-none absolute bottom-[3px] right-[3px] top-[3px] flex w-[29px] items-center justify-center bg-[#d4d0c8] shadow-[inset_1px_1px_0_#d4d0c8,inset_3px_3px_0_#fff,inset_-2px_-2px_0_#404040,inset_-3px_-3px_0_#808080]"><svg class="h-[8px] w-[14px]" viewBox="0 0 14 8"><path d="M0 0h14v2L7 8 0 2z" fill="#404040"/></svg></span>
            </div>
            <label for="recycle">Recycle on EOF ?:</label>
            <div class="relative">
              <select id="recycle" class="block h-[35px] w-full appearance-none bg-white pb-[3px] pl-[6px] shadow-[inset_2px_2px_0_#808080,inset_3px_3px_0_#404040,inset_-2px_-2px_0_#fff,inset_-3px_-3px_0_#d4d0c8]"><option>True</option><option>False</option></select>
              <span class="pointer-events-none absolute bottom-[3px] right-[3px] top-[3px] flex w-[29px] items-center justify-center bg-[#d4d0c8] shadow-[inset_1px_1px_0_#d4d0c8,inset_3px_3px_0_#fff,inset_-2px_-2px_0_#404040,inset_-3px_-3px_0_#808080]"><svg class="h-[8px] w-[14px]" viewBox="0 0 14 8"><path d="M0 0h14v2L7 8 0 2z" fill="#404040"/></svg></span>
            </div>
            <label for="stop">Stop thread on EOF ?:</label>
            <div class="relative">
              <select id="stop" class="block h-[35px] w-full appearance-none bg-white pb-[3px] pl-[6px] shadow-[inset_2px_2px_0_#808080,inset_3px_3px_0_#404040,inset_-2px_-2px_0_#fff,inset_-3px_-3px_0_#d4d0c8]"><option>False</option><option>True</option></select>
              <span class="pointer-events-none absolute bottom-[3px] right-[3px] top-[3px] flex w-[29px] items-center justify-center bg-[#d4d0c8] shadow-[inset_1px_1px_0_#d4d0c8,inset_3px_3px_0_#fff,inset_-2px_-2px_0_#404040,inset_-3px_-3px_0_#808080]"><svg class="h-[8px] w-[14px]" viewBox="0 0 14 8"><path d="M0 0h14v2L7 8 0 2z" fill="#404040"/></svg></span>
            </div>
            <label for="sharing">Sharing mode:</label>
            <div class="relative">
              <select id="sharing" class="block h-[35px] w-full appearance-none bg-white pb-[3px] pl-[6px] shadow-[inset_2px_2px_0_#808080,inset_3px_3px_0_#404040,inset_-2px_-2px_0_#fff,inset_-3px_-3px_0_#d4d0c8]"><option>All threads</option><option>Current thread group</option><option>Current thread</option></select>
              <span class="pointer-events-none absolute bottom-[3px] right-[3px] top-[3px] flex w-[29px] items-center justify-center bg-[#d4d0c8] shadow-[inset_1px_1px_0_#d4d0c8,inset_3px_3px_0_#fff,inset_-2px_-2px_0_#404040,inset_-3px_-3px_0_#808080]"><svg class="h-[8px] w-[14px]" viewBox="0 0 14 8"><path d="M0 0h14v2L7 8 0 2z" fill="#404040"/></svg></span>
            </div>
          </div>
        </fieldset>
      </div>
    </section>
  </main>
</div>
</body>
</html>
